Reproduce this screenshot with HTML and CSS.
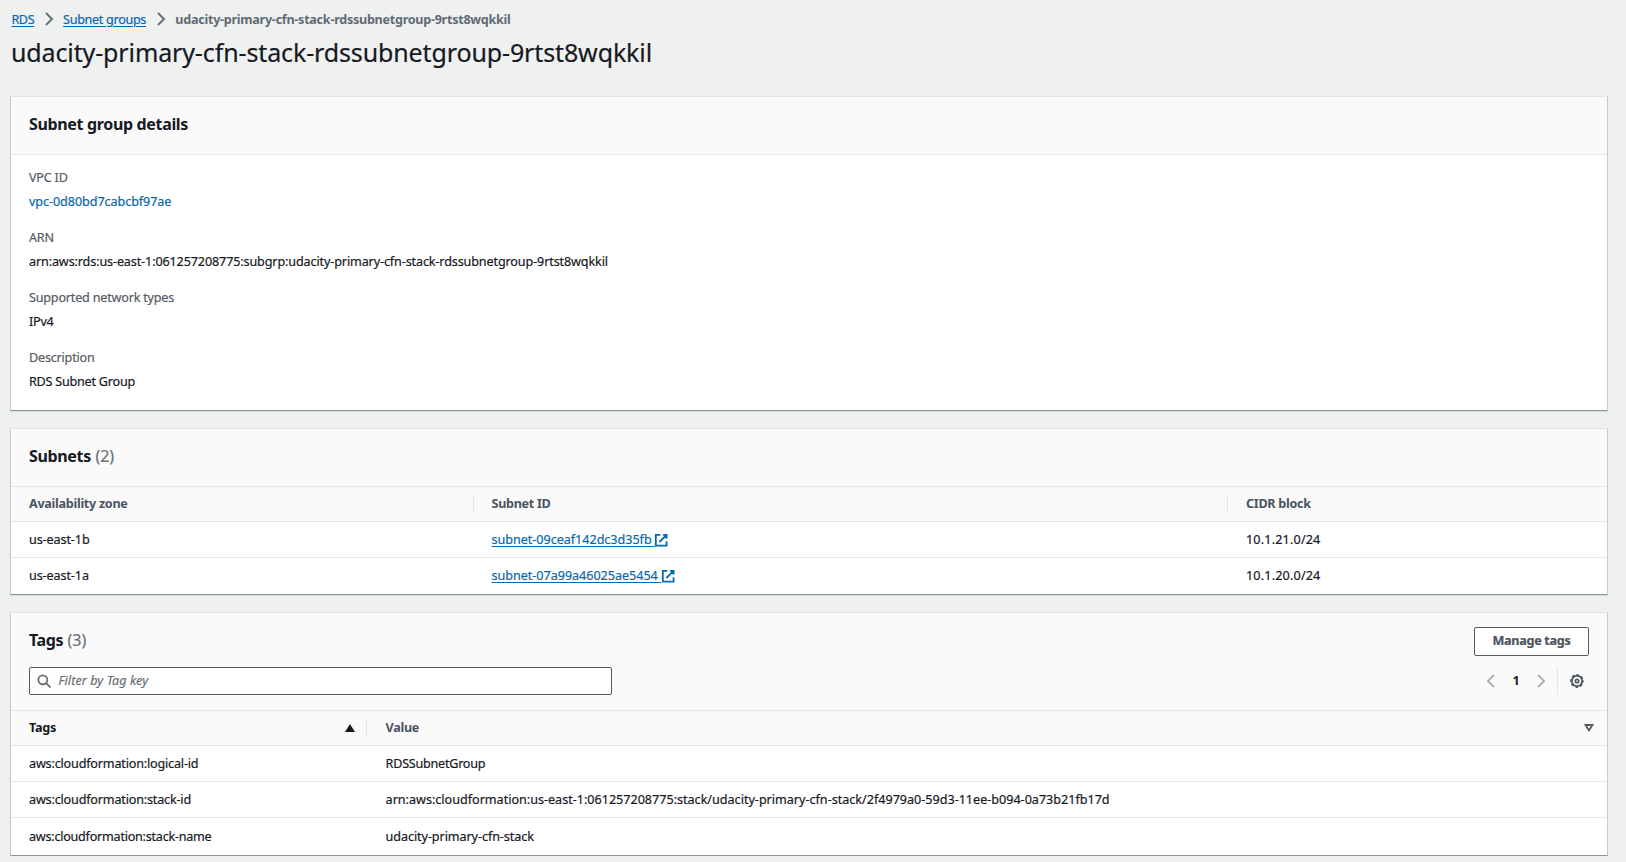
FILE: index.html
```html
<!DOCTYPE html>
<html lang="en">
<head>
<meta charset="utf-8">
<title>RDS - Subnet group</title>
<link rel="stylesheet" href="styles.css">
</head>
<body>
<nav class="crumbs">
  <a class="crumb-root" href="#">RDS</a>
  <svg class="crumb-sep" viewBox="0 0 9 16"><path d="M1 2l6 6-6 6"/></svg>
  <a class="crumb-group" href="#">Subnet groups</a>
  <svg class="crumb-sep" viewBox="0 0 9 16"><path d="M1 2l6 6-6 6"/></svg>
  <span class="crumb-current">udacity-primary-cfn-stack-rdssubnetgroup-9rtst8wqkkil</span>
</nav>
<h1>udacity-primary-cfn-stack-rdssubnetgroup-9rtst8wqkkil</h1>

<main>
  <section class="card details">
    <header class="card-head"><h2>Subnet group details</h2></header>
    <dl>
      <div><dt>VPC ID</dt><dd><a class="plain" href="#">vpc-0d80bd7cabcbf97ae</a></dd></div>
      <div><dt>ARN</dt><dd class="arn">arn:aws:rds:us-east-1:061257208775:subgrp:udacity-primary-cfn-stack-rdssubnetgroup-9rtst8wqkkil</dd></div>
      <div><dt>Supported network types</dt><dd>IPv4</dd></div>
      <div><dt>Description</dt><dd>RDS Subnet Group</dd></div>
    </dl>
  </section>

  <section class="card subnets">
    <header class="card-head"><h2>Subnets <span class="count">(2)</span></h2></header>
    <table>
      <colgroup><col class="col-zone"><col class="col-subnet"><col></colgroup>
      <thead><tr><th>Availability zone</th><th>Subnet ID</th><th>CIDR block</th></tr></thead>
      <tbody>
        <tr><td>us-east-1b</td><td><a class="subnet-link" href="#">subnet-09ceaf142dc3d35fb <svg class="external" viewBox="0 0 16 16"><path d="M10 2h4v4M6 10l8-8M14 9.05V14H2V2h5"/></svg></a></td><td class="cidr">10.1.21.0/24</td></tr>
        <tr><td>us-east-1a</td><td><a class="subnet-link" href="#">subnet-07a99a46025ae5454 <svg class="external" viewBox="0 0 16 16"><path d="M10 2h4v4M6 10l8-8M14 9.05V14H2V2h5"/></svg></a></td><td class="cidr">10.1.20.0/24</td></tr>
      </tbody>
    </table>
  </section>

  <section class="card tags">
    <header class="tags-head">
      <div class="tags-title"><h2>Tags <span class="count">(3)</span></h2><button class="manage">Manage tags</button></div>
      <div class="tools">
        <label class="filter">
          <svg viewBox="0 0 16 16"><circle cx="6.5" cy="6.5" r="5"/><path d="M10.2 10.2l4.8 4.8"/></svg>
          <input type="text" placeholder="Filter by Tag key">
        </label>
        <div class="pager">
          <svg class="page-arrow" viewBox="0 0 9 14"><path d="M8 1L2 7l6 6"/></svg>
          <span class="page">1</span>
          <svg class="page-arrow" viewBox="0 0 9 14"><path d="M1 1l6 6-6 6"/></svg>
          <span class="rule"></span>
          <svg class="gear" viewBox="0 0 14 14"><circle cx="7" cy="7" r="5.2"/><circle class="teeth" cx="7" cy="7" r="6.2"/><circle class="hub" cx="7" cy="7" r="1.7"/></svg>
        </div>
      </div>
    </header>
    <table>
      <colgroup><col class="col-tag"><col></colgroup>
      <thead><tr>
        <th class="sorted"><div class="th-row">Tags<svg class="sort" viewBox="0 0 10 8"><path class="solid" d="M5 0l5 8H0z"/></svg></div></th>
        <th><div class="th-row">Value<svg class="sort" viewBox="0 0 10 8"><path class="hollow" d="M1.6 1h6.8L5 6.4z"/></svg></div></th>
      </tr></thead>
      <tbody>
        <tr><td class="tag-key">aws:cloudformation:logical-id</td><td>RDSSubnetGroup</td></tr>
        <tr><td class="tag-key">aws:cloudformation:stack-id</td><td class="stack-arn">arn:aws:cloudformation:us-east-1:061257208775:stack/udacity-primary-cfn-stack/2f4979a0-59d3-11ee-b094-0a73b21fb17d</td></tr>
        <tr><td>aws:cloudformation:stack-name</td><td class="stack-name">udacity-primary-cfn-stack</td></tr>
      </tbody>
    </table>
  </section>
</main>
</body>
</html>
```

FILE: styles.css
```css
* { box-sizing: border-box; }

body {
  margin: 0;
  padding: 10px 18px 0 10px;
  background: #eff1f1;
  color: #16191f;
  font: 12.6px/20px "Noto Sans", "Open Sans", sans-serif;
  -webkit-text-stroke: 0.2px;
  overflow: hidden;
}

svg { display: block; fill: none; flex: none; }
a { color: #0868ae; text-underline-offset: 2px; text-decoration-thickness: 1px; }
a.plain { text-decoration: none; letter-spacing: -0.07px; }

.crumbs { display: flex; height: 20px; padding-left: 1.4px; }
.crumb-sep { width: 9px; height: 16px; margin: 1px 9.2px 0 10.6px; stroke: #687078; stroke-width: 2; }
.crumb-root { letter-spacing: -0.35px; }
.crumb-group { letter-spacing: -0.31px; }
.crumb-current { margin-left: 0.5px; color: #5f6b75; font-weight: 700; letter-spacing: -0.275px; -webkit-text-stroke: 0; }

h1 { margin: 7px 0 29px 1px; font-size: 25px; line-height: 30px; font-weight: 400; letter-spacing: -0.126px; }
h2 { margin: 0; font-size: 16px; line-height: 20px; font-weight: 700; letter-spacing: -0.34px; -webkit-text-stroke: 0; }
.count { margin-left: 0.7px; color: #687078; font-weight: 400; letter-spacing: 0; -webkit-text-stroke: 0.2px; }

main { display: flex; flex-direction: column; gap: 17px; }
.card {
  background: #fff;
  border: 1px solid #c6cccd;
  border-top-color: #e2e6e6;
  border-bottom-color: #879596;
  box-shadow: 0 1px 1px rgba(0, 28, 36, 0.08);
}
.card-head { height: 58px; padding: 17px 18px; background: #fafafa; border-bottom: 1px solid #e5e8e8; }

dl { display: flex; flex-direction: column; gap: 16.6px; height: 255px; margin: 0; padding: 13px 18px 0; }
dt { height: 23.5px; color: #545b64; letter-spacing: -0.2px; }
dd { height: 20px; margin: 0; letter-spacing: -0.23px; }
dd.arn { letter-spacing: -0.126px; }

table { width: 100%; border-spacing: 0; table-layout: fixed; }
.col-zone { width: 463px; }
.col-subnet { width: 754px; }
.col-tag { width: 356px; }
th {
  height: 35px;
  padding: 7px 18px;
  text-align: left;
  color: #4b545e;
  letter-spacing: -0.29px;
  background: #fafafa;
  border-bottom: 1px solid #e5e8e8;
  -webkit-text-stroke: 0;
}
th:not(:last-child) {
  background: linear-gradient(#e2e6e6, #e2e6e6) right 8px / 1px 18px no-repeat #fafafa;
}
.subnets th:nth-child(2), .subnets td:nth-child(2) { padding-left: 17.5px; }
td { height: 36px; padding: 8px 18px 7px; border-bottom: 1px solid #e5e8e8; letter-spacing: -0.245px; }
td.tag-key { letter-spacing: -0.18px; }
td.stack-arn { letter-spacing: -0.01px; }
td.stack-name { letter-spacing: -0.08px; }
.subnets td { letter-spacing: -0.11px; }
.subnets td.cidr { letter-spacing: 0.17px; }
.subnet-link { display: inline-flex; white-space: pre; letter-spacing: -0.03px; }
.external { width: 14.4px; height: 14.4px; margin: 3px 0 0 -0.4px; stroke: #0868ae; stroke-width: 2; }
tbody tr:last-child td { height: 37px; border-bottom: 0; padding-bottom: 8px; }
.subnets tbody tr:last-child td { height: 36px; }
.tags tbody tr:last-child td { padding-top: 9px; }
.tags td:nth-child(2), .tags th:nth-child(2) { padding-left: 18.6px; }

.tags-head { height: 98px; padding: 14px 18px 0; background: #fafafa; border-bottom: 1px solid #e5e8e8; }
.tags-title, .tools { display: flex; justify-content: space-between; }
.tags-title h2 { padding-top: 3px; letter-spacing: -0.4px; }
.tags-title .count { letter-spacing: 0; }
.manage {
  width: 115px;
  height: 29px;
  padding: 0 0 2px;
  border: 1px solid #545b64;
  border-radius: 2px;
  background: #fff;
  color: #4b545e;
  font: inherit;
  font-weight: 700;
  letter-spacing: -0.3px;
}
.tools { margin-top: 11px; height: 28px; }
.filter {
  display: flex;
  align-items: center;
  gap: 7px;
  width: 583px;
  height: 28px;
  padding-left: 7px;
  background: #fff;
  border: 1px solid #545b64;
  border-radius: 2px;
}
.filter svg { width: 14.4px; height: 14.4px; stroke: #687078; stroke-width: 2; }
.filter input { flex: 1; padding: 0; border: 0; outline: 0; background: none; font: inherit; letter-spacing: 0.08px; }
.filter input::placeholder { color: #687078; font-style: italic; opacity: 1; }

.pager { display: flex; align-items: center; padding-right: 5px; }
.page-arrow { width: 9px; height: 14px; stroke: #a3b1b1; stroke-width: 1.8; }
.page { width: 42px; text-align: center; font-weight: 700; -webkit-text-stroke: 0; }
.rule { width: 1px; height: 28px; margin: 0 12px 0 11px; background: #e2e6e6; }
.gear { width: 14px; height: 14px; overflow: visible; stroke: #545b64; stroke-width: 1.9; }
.gear .teeth { stroke-width: 1.5; stroke-dasharray: 2.6 2.27; stroke-dashoffset: 1.3; }
.gear .hub { stroke-width: 1.7; }

.th-row { display: flex; align-items: center; justify-content: space-between; }
.sorted { color: #16191f; }
.sort { width: 10px; height: 8px; }
.sorted .sort { margin-right: -5.5px; }
th:last-child .sort { margin-right: -5px; }
.solid { fill: #16191f; }
.hollow { stroke: #545b64; stroke-width: 1.8; }
```
